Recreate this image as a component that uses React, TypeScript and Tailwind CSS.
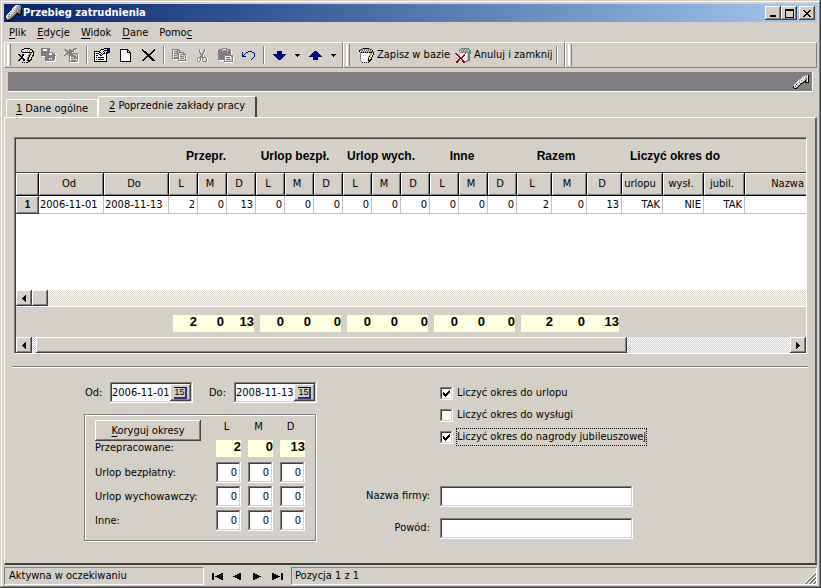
import React, { useState } from 'react';

/* ---------- pixel icons ---------- */

const PALETTE: Record<string, string> = {
  k: '#000000',
  w: '#ffffff',
  g: '#808080',
  l: '#c0c0c0',
  d: '#404040',
  y: '#e8d85a',
  n: '#000080',
  r: '#9c0a14',
  t: '#3f8f7f',
};

function Pixels({ rows }: { rows: string[] }) {
  const width = Math.max(...rows.map((r) => r.length));
  return (
    <svg
      width={width}
      height={rows.length}
      viewBox={`0 0 ${width} ${rows.length}`}
      shapeRendering="crispEdges"
      aria-hidden="true"
      className="block shrink-0"
    >
      {rows.flatMap((row, y) =>
        row
          .split('')
          .map((c, x) => (PALETTE[c] ? <rect key={`${x}-${y}`} x={x} y={y} width={1} height={1} fill={PALETTE[c]} /> : null)),
      )}
    </svg>
  );
}

const FLASHLIGHT = [
  '.........lwlll..',
  '........lwllggl.',
  '.......wlwlglgg.',
  '......lwlllglggk',
  '......wlwlglgggk',
  '.....lwlllglggdk',
  '....wwlwlgglggdk',
  '...wllllglgdggdk',
  '..wlwlwglgdkdgdk',
  '.wlgllglgdk.kkk.',
  'lwllwglgdk......',
  'wlgllggdk.......',
  'lwlgggdk........',
  'gllggdk.........',
  'kgddkk..........',
  '.kkk............',
];

const FLASHLIGHT_SMALL = [
  '............l.wk',
  '..........lwllwk',
  '.........wlwl.wk',
  '........lwlwlglk',
  '......llwlwlg.wk',
  '.....wlwglwlk.wk',
  '....lwlwlwgkk.wk',
  '...lwwglwgk.kkkk',
  '..lwlwwgkk......',
  '.lwkwwlk........',
  'lwlwlgk.........',
  'kwgwlk..........',
  'klwgk...........',
  '.kkk............',
];

const JAR_CHECK = [
  '......kkkkkk....',
  '....kklwlwlwkk..',
  '...kwlwlwlwlwlk.',
  '...kllwlwlwlwwkk',
  '....kkkkkkkkkkyk',
  '....lwwwwwwggyyk',
  'kk..kkwwwwlgkywk',
  '.kk.kkwwwlgkyykk',
  '..kkkwwwlwgkywk.',
  '...kkwwwwgkyyk..',
  '..kkkkwwlgkywk..',
  '.kk..kkwwgkykk..',
  'kk...kkwlkkkk...',
  '.....lwwwlkk....',
  '....k.k.kk......',
];

const JAR_PEN = [
  '...gkkkkkkg....',
  '.gkglglglglkg..',
  'kglglglglglglk.',
  'kwglglglglglgk.',
  '.gkgkgkgkgkkkyk',
  '.gwwwwwwwwlgyyk',
  '.gwwwwwwwwwgywk',
  '.gwwlwwwwwgyyk.',
  '.gwwwwwwwlkywk.',
  '.gwwlwwwwgyyk..',
  '.gwwwwwwwkywk..',
  '.gwwlwwwwkykk..',
  '.gwwwwwwlkkk...',
  '..gwwwwwwgk....',
  '...k.k.k.k.....',
];

const JAR_CANCEL = [
  '......gggggggg..',
  '....gglglglglgg.',
  '....glglglglglgt',
  '....gwglglglglgt',
  '....lgggggggggtt',
  'rr..lwwwwwrwlgtt',
  '.rr.lwwwwrwwlgt.',
  '..rrlwwwrrwwlgt.',
  '...rrwwrrwwwlgt.',
  '....rrrrwwwwlgt.',
  '....rrrwwwwwlgt.',
  '...rrwrrwwwwlgt.',
  '..rr..wrrwwlggt.',
  '.rrr...rrrggg...',
  '.rr.....rr......',
];

const SAVE_ALL = [
  'ggggggggg.......',
  'ggwwwwggg.......',
  'ggwwwwgggw......',
  'gggggggggw......',
  'gggggggggggg....',
  'ggggggggwwwggg..',
  'ggggggggwwwgggw.',
  'gggggggggggggggw',
  '.wwwggggggggggw.',
  '....ggggggggggw.',
  '....gggg...gggw.',
  '....gggg.g.gggw.',
  '....gggggggggww.',
  '.....wwwwwwwww..',
];

const DISCARD = [
  '..........ggg...',
  'gg...gg..gggw...',
  '.ggg.gggggw.....',
  '..ggggggggw.....',
  '...gggggw.......',
  '..gggggggggggg..',
  '.gggwgggg....gw.',
  'ggw.ggggggg..gw.',
  '.....gwggggg.gw.',
  '.....gw...ggggw.',
  '.....gwgggg.ggw.',
  '.....gw......gw.',
  '.....gwggggg.gw.',
  '.....ggggggggww.',
  '......wwwwwwww..',
];

const PROPERTIES = [
  '..........kkkknn.',
  '.......kkkwlwknn.',
  '......kwlwkkkknn.',
  'kkkkkkwlwkllwknn.',
  'kwwwwkkwlwkwkknn.',
  'kwkkkwwkwkkwkk...',
  'kwwwwkkwkwwwk....',
  'kwkkwwkkwwwwk....',
  'kwwwwwwwwwwwk....',
  'kwkwkkkkkkwwk....',
  'kwwwwwwwwwwwk....',
  'kwkwkkkkkkwwk....',
  'kwwwwwwwwwwwk....',
  'kkkkkkkkkkkkk....',
];

const NEW_PAGE = [
  'kkkkkkkk...',
  'kwwwwwwkk..',
  'kwwwwwwkwk.',
  'kwwwwwwkkkk',
  'kwwwwwwwwwk',
  'kwwwwwwwwwk',
  'kwwwwwwwwwk',
  'kwwwwwwwwwk',
  'kwwwwwwwwwk',
  'kwwwwwwwwwk',
  'kwwwwwwwwwk',
  'kwwwwwwwwwk',
  'kkkkkkkkkkk',
];

const DELETE = [
  'k...........k.',
  'kk.........kk.',
  '.kkk......kk..',
  '..kkk....kk...',
  '...kkk..kk....',
  '....kkkkk.....',
  '.....kkk......',
  '....kkkkk.....',
  '...kk..kkk....',
  '..kk....kkk...',
  '.kk......kkk..',
  'kk........kkk.',
];

const COPY = [
  'ggggggg.........',
  'gw...ggg........',
  'gwggggwgg.......',
  'gw...ggggggg....',
  'gwgggggw...gg...',
  'gw...ggwgggggg..',
  'gwggg.gw.....gw.',
  'gw....gwggggwgw.',
  'gwgggggw.....gw.',
  'gggggggwggggwgw.',
  '.wwwwwgw.....gw.',
  '......gggggggggw',
  '.......wwwwwwww.',
];

const CUT = [
  '..g....g...',
  '..gw...gw..',
  '..gw..ggw..',
  '..ggw.gw...',
  '...gwggw...',
  '...gggw....',
  '....ggw....',
  '...gggw....',
  '.ggg.ggggw.',
  'gw.gwg.w.gw',
  'gw.gwgw..gw',
  'gw.gwgw..gw',
  '.ggw..ggggw',
];

const PASTE = [
  '....ggggg.......',
  '.ggggwwwgggg....',
  'ggggwggggwgggw..',
  'gggggggggggggw..',
  'gggggggggggggw..',
  'gggggggggggggw..',
  'gggggggggggggw..',
  'ggggggggggggggg.',
  'gggggggwwwwwwgg.',
  'gggggggwggggw.gw',
  'gggggggw......gw',
  'gggggggwggggg.gw',
  '.wwwwwgw......gw',
  '......ggggggggg.',
  '.......wwwwwwww.',
];

const UNDO = [
  '......nnnn...',
  'n...nn....nn.',
  'n..n........n',
  'n.n.........n',
  'nn..........n',
  'nnnn........n',
  '...........n.',
  '..........n..',
  '.........n...',
];

const ARROW_DOWN = [
  '....nnnnn....',
  '....nnnnn....',
  '....nnnnn....',
  'nnnnnnnnnnnnn',
  '.nnnnnnnnnnn.',
  '..nnnnnnnnn..',
  '...nnnnnnn...',
  '....nnnnn....',
  '.....nnn.....',
];
const ARROW_UP = [...ARROW_DOWN].reverse();

const CARET_DOWN = ['kkkkk', '.kkk.', '..k..'];
const SCROLL_LEFT = ['...k', '..kk', '.kkk', 'kkkk', '.kkk', '..kk', '...k'];
const SCROLL_RIGHT = ['k...', 'kk..', 'kkk.', 'kkkk', 'kkk.', 'kk..', 'k...'];

const MINIMIZE = ['......', '......', '......', '......', '......', '......', 'kkkkkk', 'kkkkkk'];
const MAXIMIZE = ['kkkkkkkkk', 'kkkkkkkkk', 'k.......k', 'k.......k', 'k.......k', 'k.......k', 'k.......k', 'k.......k', 'kkkkkkkkk'];
const CLOSE = ['kk....kk', '.kk..kk.', '..kkkk..', '...kk...', '..kkkk..', '.kk..kk.', 'kk....kk'];

const CHECK = ['......k', '.....kk', 'k...kkk', 'kk.kkk.', 'kkkkk..', '.kkk...', '..k....'];

const NAV_PREV = ['......kk', '....kkkk', '..kkkkkk', 'kkkkkkkk', '..kkkkkk', '....kkkk', '......kk'];
const NAV_NEXT = NAV_PREV.map((r) => r.split('').reverse().join(''));
const NAV_FIRST = NAV_PREV.map((r) => 'kk.' + r);
const NAV_LAST = NAV_FIRST.map((r) => r.split('').reverse().join(''));

const GRIP = [
  '............w',
  '...........wg',
  '..........wgg',
  '.........wgg.',
  '........wgg.w',
  '.......wgg.wg',
  '......wgg.wgg',
  '.....wgg.wgg.',
  '....wgg.wgg.w',
  '...wgg.wgg.wg',
  '..wgg.wgg.wgg',
  '.wgg.wgg.wgg.',
];

/* ---------- bevels ---------- */

const RAISED =
  'bg-[#d4d0c8] shadow-[inset_-1px_-1px_#404040,inset_1px_1px_#ffffff,inset_-2px_-2px_#808080]';
const SUNKEN =
  'bg-white shadow-[inset_-1px_-1px_#ffffff,inset_1px_1px_#808080,inset_-2px_-2px_#d4d0c8,inset_2px_2px_#404040]';
const TRACK = 'bg-[repeating-conic-gradient(#ffffff_0_25%,#d4d0c8_0_50%)] bg-[length:2px_2px]';

/* ---------- small parts ---------- */

function Hot({ text, at }: { text: string; at: number }) {
  return (
    <>
      {text.slice(0, at)}
      <span className="underline underline-offset-2">{text[at]}</span>
      {text.slice(at + 1)}
    </>
  );
}

function Tool({ rows, label, disabled }: { rows: string[]; label: string; disabled?: boolean }) {
  return (
    <button type="button" aria-label={label} disabled={disabled} className="flex h-6 w-[23px] items-center justify-center">
      <Pixels rows={rows} />
    </button>
  );
}

function DropArrow({ label }: { label: string }) {
  return (
    <button type="button" aria-label={label} className="flex h-6 w-[13px] items-center justify-center">
      <Pixels rows={CARET_DOWN} />
    </button>
  );
}

function Separator() {
  return <div className="mx-[3px] h-[18px] w-[2px] shrink-0 border-l border-r border-l-[#808080] border-r-white" />;
}

function Band({ className, children }: { className?: string; children?: React.ReactNode }) {
  return (
    <div
      className={`flex h-[26px] items-center border border-t-white border-r-[#808080] border-b-[#808080] border-l-white ${className ?? ''}`}
    >
      <div className="ml-[2px] mr-[1px] h-[22px] w-[4px] shrink-0 border-l-2 border-r border-l-white border-r-[#808080]" />
      {children}
    </div>
  );
}

function DateField({ id, label, value }: { id: string; label: string; value: string }) {
  return (
    <div className="flex items-center">
      <label htmlFor={id} className="w-[25px]">
        {label}
      </label>
      <div className={`flex h-[21px] w-[83px] p-[2px] ${SUNKEN}`}>
        <input id={id} defaultValue={value} className="w-[58px] min-w-0 bg-transparent outline-none" />
        <button type="button" aria-label="Kalendarz" className={`flex h-[17px] w-[21px] items-center justify-center ${RAISED}`}>
          <span className="flex h-[12px] w-[13px] items-center justify-center border-t border-r-2 border-b-2 border-t-black border-r-[#303078] border-b-[#303078] font-['Liberation_Sans',sans-serif] text-[9px] leading-[9px]">
            15
          </span>
        </button>
      </div>
    </div>
  );
}

function Check({ label, initial, focused }: { label: string; initial: boolean; focused?: boolean }) {
  return (
    <label className="flex h-[22px] items-center gap-[3px]">
      <span className="grid place-items-center">
        <input
          type="checkbox"
          defaultChecked={initial}
          className={`peer size-[13px] appearance-none [grid-area:1/1] ${SUNKEN}`}
        />
        <span className="pointer-events-none hidden [grid-area:1/1] peer-checked:block">
          <Pixels rows={CHECK} />
        </span>
      </span>
      <span className={`border border-dotted ${focused ? 'border-black' : 'border-transparent'}`}>{label}</span>
    </label>
  );
}

/* ---------- data ---------- */

const LMD = ['L', 'M', 'D'];

const COLUMNS: { title: string; width: number; value: string; left?: boolean }[] = [
  { title: 'Od', width: 65, value: '2006-11-01', left: true },
  { title: 'Do', width: 65, value: '2008-11-13', left: true },
  ...['2', '0', '13', '0', '0', '0', '0', '0', '0', '0', '0', '0'].map((value, i) => ({ title: LMD[i % 3], width: 29, value })),
  ...['2', '0', '13'].map((value, i) => ({ title: LMD[i], width: 35, value })),
  { title: 'urlopu', width: 41, value: 'TAK' },
  { title: 'wysł.', width: 41, value: 'NIE' },
  { title: 'jubil.', width: 41, value: 'TAK' },
];

const GROUPS = [
  { title: 'Przepr.', cls: 'w-[88px]' },
  { title: 'Urlop bezpł.', cls: 'w-[90px]' },
  { title: 'Urlop wych.', cls: 'w-[82px]' },
  { title: 'Inne', cls: 'w-[80px]' },
  { title: 'Razem', cls: 'w-[108px]' },
  { title: 'Liczyć okres do', cls: 'w-[130px]' },
];

const TOTALS = [
  ['2', '0', '13'],
  ['0', '0', '0'],
  ['0', '0', '0'],
  ['0', '0', '0'],
];

const MENU = [
  { text: 'Plik', at: 0 },
  { text: 'Edycje', at: 0 },
  { text: 'Widok', at: 0 },
  { text: 'Dane', at: 0 },
  { text: 'Pomoc', at: 4 },
];

/* ---------- window sections ---------- */

function TitleBar() {
  return (
    <header className="flex h-[18px] items-center bg-linear-to-r from-[#0a246a] to-[#a6caf0] pr-[2px] pl-[2px]">
      <Pixels rows={FLASHLIGHT} />
      <h1 className="ml-px flex-1 font-bold text-white">Przebieg zatrudnienia</h1>
      <button type="button" aria-label="Minimalizuj" className={`flex h-[14px] w-4 items-center justify-center ${RAISED}`}>
        <Pixels rows={MINIMIZE} />
      </button>
      <button type="button" aria-label="Maksymalizuj" className={`flex h-[14px] w-4 items-center justify-center ${RAISED}`}>
        <Pixels rows={MAXIMIZE} />
      </button>
      <button type="button" aria-label="Zamknij" className={`ml-[2px] flex h-[14px] w-4 items-center justify-center ${RAISED}`}>
        <Pixels rows={CLOSE} />
      </button>
    </header>
  );
}

function Toolbar() {
  return (
    <div className="flex">
      <Band className="w-[339px]">
        <div className="ml-[2px] flex items-center">
          <Tool rows={JAR_CHECK} label="Zatwierdź" />
          <Tool rows={SAVE_ALL} label="Zapisz" disabled />
          <Tool rows={DISCARD} label="Odrzuć" disabled />
          <Separator />
          <Tool rows={PROPERTIES} label="Właściwości" />
          <Tool rows={NEW_PAGE} label="Nowy" />
          <Tool rows={DELETE} label="Usuń" />
          <Separator />
          <Tool rows={COPY} label="Kopiuj" disabled />
          <Tool rows={CUT} label="Wytnij" disabled />
          <Tool rows={PASTE} label="Wklej" disabled />
          <Tool rows={UNDO} label="Cofnij" />
          <Separator />
          <Tool rows={ARROW_DOWN} label="Następny" />
          <DropArrow label="Następny, opcje" />
          <Tool rows={ARROW_UP} label="Poprzedni" />
          <DropArrow label="Poprzedni, opcje" />
        </div>
      </Band>
      <Band className="w-[222px]">
        <button type="button" className="ml-2 flex h-6 w-[96px] items-center gap-[3px] whitespace-nowrap">
          <Pixels rows={JAR_PEN} />
          Zapisz w bazie
        </button>
        <button type="button" className="flex h-6 w-[98px] items-center gap-[3px] whitespace-nowrap">
          <Pixels rows={JAR_CANCEL} />
          Anuluj i zamknij
        </button>
        <Separator />
      </Band>
      <Band className="flex-1" />
    </div>
  );
}

function Tabs() {
  return (
    <div role="tablist" className="flex items-end pl-[2px]">
      <button
        type="button"
        role="tab"
        aria-selected="false"
        className="h-[18px] w-[92px] rounded-t-[2px] border-t border-r border-l border-white text-center"
      >
        <Hot text="1 Dane ogólne" at={0} />
      </button>
      <button
        type="button"
        role="tab"
        aria-selected="true"
        className="-mb-px h-[22px] w-[159px] rounded-t-[2px] border-t border-r-2 border-l border-t-white border-r-[#404040] border-l-white bg-[#d4d0c8] pb-1 text-center"
      >
        <Hot text="2 Poprzednie zakłady pracy" at={0} />
      </button>
    </div>
  );
}

function Grid() {
  const head =
    'border-r border-b border-black bg-[#d4d0c8] p-0 font-normal shadow-[inset_1px_1px_#ffffff,inset_-1px_-1px_#808080]';
  return (
    <div className="h-[118px] overflow-hidden border-t border-t-[#404040] bg-white">
      <table className="w-full table-fixed border-separate border-spacing-0">
        <colgroup>
          <col style={{ width: 23 }} />
          {COLUMNS.map((c, i) => (
            <col key={i} style={{ width: c.width }} />
          ))}
          <col />
        </colgroup>
        <thead>
          <tr className="h-[23px]">
            <td className={head} />
            {COLUMNS.map((c, i) => (
              <th key={i} className={`pr-1 text-center ${head}`}>
                {c.title}
              </th>
            ))}
            <th className="border-b border-black bg-[#d4d0c8] p-0 pr-[2px] text-right font-normal shadow-[inset_1px_1px_#ffffff,inset_0_-1px_#808080]">
              Nazwa
            </th>
          </tr>
        </thead>
        <tbody>
          <tr className="h-[18px]">
            <th className="bg-[#d4d0c8] p-0 text-center font-['Liberation_Sans',sans-serif] text-[10px] font-bold shadow-[inset_-1px_-1px_#404040,inset_1px_1px_#ffffff,inset_-2px_-2px_#808080]">
              1
            </th>
            {COLUMNS.map((c, i) => (
              <td
                key={i}
                className={`overflow-hidden border-r border-b border-[#c0c0c0] p-0 whitespace-nowrap ${c.left ? 'pl-px text-left' : 'pr-[2px] text-right'}`}
              >
                {c.value}
              </td>
            ))}
            <td className="border-b border-[#c0c0c0] p-0" />
          </tr>
        </tbody>
      </table>
    </div>
  );
}

function ScrollButton({ rows, label }: { rows: string[]; label: string }) {
  return (
    <button type="button" aria-label={label} className={`flex size-4 shrink-0 items-center justify-center ${RAISED}`}>
      <Pixels rows={rows} />
    </button>
  );
}

function HistoryPanel() {
  return (
    <section className="mt-[19px] mr-2 ml-[9px] border border-t-[#808080] border-r-white border-b-white border-l-[#808080]">
      <div className="border-t border-l border-[#404040]">
        <div className="flex h-[33px] items-center overflow-hidden pl-[146px] font-['Liberation_Sans',sans-serif] text-[12px] font-bold">
          {GROUPS.map((g) => (
            <div key={g.title} className={`shrink-0 text-center whitespace-nowrap ${g.cls}`}>
              {g.title}
            </div>
          ))}
        </div>
        <Grid />
        <div className={`flex h-4 ${TRACK}`}>
          <ScrollButton rows={SCROLL_LEFT} label="Przewiń w lewo" />
          <div className={`size-4 ${RAISED}`} />
        </div>
        <div className="flex h-[31px] items-start border-t border-white pt-2 pl-[157px] font-['Liberation_Sans',sans-serif] text-[13px] leading-[14px] font-bold">
          {TOTALS.map((t, i) => (
            <div key={i} className="mr-[6px] flex h-[17px] w-[81px] bg-[#ffffe1] text-right">
              <span className="w-[24px]">{t[0]}</span>
              <span className="w-[27px]">{t[1]}</span>
              <span className="w-[30px]">{t[2]}</span>
            </div>
          ))}
          <div className="flex h-[17px] w-[98px] bg-[#ffffe1] text-right">
            <span className="w-[32px]">2</span>
            <span className="w-[32px]">0</span>
            <span className="w-[34px]">13</span>
          </div>
        </div>
        <div className={`flex h-4 ${TRACK}`}>
          <ScrollButton rows={SCROLL_LEFT} label="Przewiń w lewo" />
          <div className={`ml-1 w-[591px] ${RAISED}`} />
          <div className="flex-1" />
          <ScrollButton rows={SCROLL_RIGHT} label="Przewiń w prawo" />
        </div>
      </div>
    </section>
  );
}

function PeriodBox() {
  const rows = ['Urlop bezpłatny:', 'Urlop wychowawczy:', 'Inne:'];
  return (
    <div className="h-[127px] w-[232px] border border-[#808080] shadow-[1px_1px_#ffffff,inset_1px_1px_#ffffff]">
      <div className="flex pt-[5px] pl-[10px]">
        <div className="w-[121px]">
          <button type="button" className={`h-[21px] w-[106px] ${RAISED}`}>
            <Hot text="Koryguj okresy" at={0} />
          </button>
          <div className="h-4 leading-[14px]">Przepracowane:</div>
        </div>
        <div>
          <div className="flex h-5 text-center leading-[14px]">
            {LMD.map((l) => (
              <span key={l} className="mr-[7px] w-[25px] pr-1">
                {l}
              </span>
            ))}
          </div>
          <div className="flex font-['Liberation_Sans',sans-serif] text-[13px] leading-[14px] font-bold">
            {TOTALS[0].map((t, i) => (
              <output key={i} className="mr-[7px] h-[17px] w-[25px] bg-[#ffffe1] text-right">
                {t}
              </output>
            ))}
          </div>
        </div>
      </div>
      <div className="flex flex-col gap-[3px] pt-[5px] pl-[10px]">
        {rows.map((r) => (
          <div key={r} className="flex h-[21px]">
            <span className="w-[121px] pt-[3px]">{r}</span>
            {LMD.map((l) => (
              <input
                key={l}
                aria-label={`${r} ${l}`}
                defaultValue="0"
                className={`mr-[7px] h-[21px] w-[25px] pr-1 text-right outline-none ${SUNKEN}`}
              />
            ))}
          </div>
        ))}
      </div>
    </div>
  );
}

function TextRow({ id, label }: { id: string; label: string }) {
  const [value, setValue] = useState('');
  return (
    <div className="flex h-8 items-center">
      <label htmlFor={id} className="w-[74px] pr-[10px] text-right whitespace-nowrap">
        {label}
      </label>
      <input
        id={id}
        value={value}
        onChange={(e) => setValue(e.target.value)}
        className={`h-[21px] w-[193px] px-1 outline-none ${SUNKEN}`}
      />
    </div>
  );
}

function DetailForm() {
  return (
    <section className="flex pt-[14px] pl-[79px]">
      <div className="w-[282px]">
        <div className="flex gap-4 pl-px">
          <DateField id="from" label="Od:" value="2006-11-01" />
          <DateField id="to" label="Do:" value="2008-11-13" />
        </div>
        <div className="mt-[11px]">
          <PeriodBox />
        </div>
      </div>
      <div>
        <div className="pl-[74px]">
          <Check label="Liczyć okres do urlopu" initial />
          <Check label="Liczyć okres do wysługi" initial={false} />
          <Check label="Liczyć okres do nagrody jubileuszowej" initial focused />
        </div>
        <div className="mt-8">
          <TextRow id="company" label="Nazwa firmy:" />
          <TextRow id="reason" label="Powód:" />
        </div>
      </div>
    </section>
  );
}

function StatusBar() {
  const nav = [
    { rows: NAV_FIRST, label: 'Pierwszy' },
    { rows: NAV_PREV, label: 'Poprzedni' },
    { rows: NAV_NEXT, label: 'Następny' },
    { rows: NAV_LAST, label: 'Ostatni' },
  ];
  const pane = 'h-[18px] border border-t-[#808080] border-r-white border-b-white border-l-[#808080]';
  return (
    <footer className="flex h-[20px] items-end">
      <div className={`w-[200px] pl-1 ${pane}`}>Aktywna w oczekiwaniu</div>
      <nav className="flex h-[18px] flex-none items-center pl-[3px]">
        {nav.map((n) => (
          <button key={n.label} type="button" aria-label={n.label} className="flex h-4 w-5 items-center justify-center">
            <Pixels rows={n.rows} />
          </button>
        ))}
      </nav>
      <div className={`ml-1 flex flex-1 items-end justify-between pl-[3px] ${pane}`}>
        <span>Pozycja 1 z 1</span>
        <Pixels rows={GRIP} />
      </div>
    </footer>
  );
}

export default function App() {
  return (
    <div className="flex min-h-screen w-full flex-col bg-[#d4d0c8] p-1 pb-[3px] font-['DejaVu_Sans_Condensed','DejaVu_Sans',sans-serif] text-[11px] leading-4 text-black shadow-[inset_-1px_-1px_#404040,inset_1px_1px_#d4d0c8,inset_-2px_-2px_#808080,inset_2px_2px_#ffffff]">
      <TitleBar />
      <nav className="flex h-5 items-end gap-[11px] pb-px pl-[5px]">
        {MENU.map((m) => (
          <button key={m.text} type="button">
            <Hot text={m.text} at={m.at} />
          </button>
        ))}
      </nav>
      <Toolbar />
      <div className="mx-1 mt-1 flex h-5 items-center justify-end border-r border-b border-white bg-[#808080] pr-[3px]">
        <Pixels rows={FLASHLIGHT_SMALL} />
      </div>
      <div className="mt-1">
        <Tabs />
      </div>
      <main className="flex-1 border-t border-r-2 border-b-2 border-l border-t-white border-r-[#606060] border-b-[#404040] border-l-white pb-3">
        <HistoryPanel />
        <hr className="mx-[7px] mt-3 h-[2px] border-0 border-t border-b border-t-[#808080] border-b-white" />
        <DetailForm />
      </main>
      <StatusBar />
    </div>
  );
}
